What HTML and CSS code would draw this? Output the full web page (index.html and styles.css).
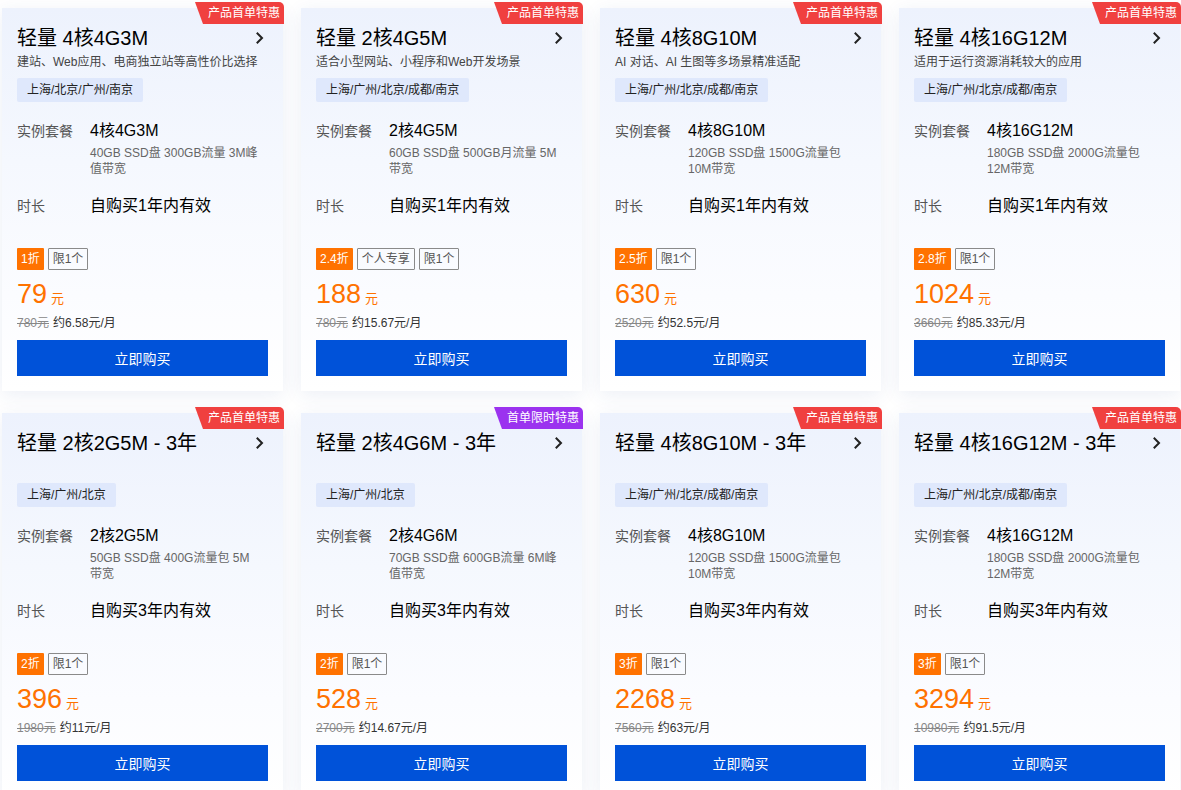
FILE: index.html
```html
<!DOCTYPE html>
<html lang="zh-CN">
<head>
<meta charset="utf-8">
<title>轻量应用服务器</title>
<link rel="stylesheet" href="styles.css">
</head>
<body>
<div class="grid">

  <div class="card">
    <span class="badge red">产品首单特惠</span>
    <div class="head"><span class="title">轻量 4核4G3M</span><svg class="chev" width="8" height="12" viewBox="0 0 8 12"><polyline points="1.5,1.5 6,6 1.5,10.5" /></svg></div>
    <div class="sub">建站、Web应用、电商独立站等高性价比选择</div>
    <div class="region">上海/北京/广州/南京</div>
    <div class="spec"><span class="lab">实例套餐</span><div class="val"><div class="v">4核4G3M</div><div class="desc">40GB SSD盘 300GB流量 3M峰值带宽</div></div></div>
    <div class="spec dur"><span class="lab">时长</span><div class="val"><div class="v">自购买1年内有效</div></div></div>
    <div class="tags"><span class="disc">1折</span><span class="lim">限1个</span></div>
    <div class="price"><span class="num">79</span><span class="yuan">元</span></div>
    <div class="orig"><s>780元</s><span>约6.58元/月</span></div>
    <button class="buy">立即购买</button>
  </div>

  <div class="card">
    <span class="badge red">产品首单特惠</span>
    <div class="head"><span class="title">轻量 2核4G5M</span><svg class="chev" width="8" height="12" viewBox="0 0 8 12"><polyline points="1.5,1.5 6,6 1.5,10.5" /></svg></div>
    <div class="sub">适合小型网站、小程序和Web开发场景</div>
    <div class="region">上海/广州/北京/成都/南京</div>
    <div class="spec"><span class="lab">实例套餐</span><div class="val"><div class="v">2核4G5M</div><div class="desc">60GB SSD盘 500GB月流量 5M带宽</div></div></div>
    <div class="spec dur"><span class="lab">时长</span><div class="val"><div class="v">自购买1年内有效</div></div></div>
    <div class="tags"><span class="disc">2.4折</span><span class="lim">个人专享</span><span class="lim">限1个</span></div>
    <div class="price"><span class="num">188</span><span class="yuan">元</span></div>
    <div class="orig"><s>780元</s><span>约15.67元/月</span></div>
    <button class="buy">立即购买</button>
  </div>

  <div class="card">
    <span class="badge red">产品首单特惠</span>
    <div class="head"><span class="title">轻量 4核8G10M</span><svg class="chev" width="8" height="12" viewBox="0 0 8 12"><polyline points="1.5,1.5 6,6 1.5,10.5" /></svg></div>
    <div class="sub">AI 对话、AI 生图等多场景精准适配</div>
    <div class="region">上海/广州/北京/成都/南京</div>
    <div class="spec"><span class="lab">实例套餐</span><div class="val"><div class="v">4核8G10M</div><div class="desc">120GB SSD盘 1500G流量包 10M带宽</div></div></div>
    <div class="spec dur"><span class="lab">时长</span><div class="val"><div class="v">自购买1年内有效</div></div></div>
    <div class="tags"><span class="disc">2.5折</span><span class="lim">限1个</span></div>
    <div class="price"><span class="num">630</span><span class="yuan">元</span></div>
    <div class="orig"><s>2520元</s><span>约52.5元/月</span></div>
    <button class="buy">立即购买</button>
  </div>

  <div class="card">
    <span class="badge red">产品首单特惠</span>
    <div class="head"><span class="title">轻量 4核16G12M</span><svg class="chev" width="8" height="12" viewBox="0 0 8 12"><polyline points="1.5,1.5 6,6 1.5,10.5" /></svg></div>
    <div class="sub">适用于运行资源消耗较大的应用</div>
    <div class="region">上海/广州/北京/成都/南京</div>
    <div class="spec"><span class="lab">实例套餐</span><div class="val"><div class="v">4核16G12M</div><div class="desc">180GB SSD盘 2000G流量包 12M带宽</div></div></div>
    <div class="spec dur"><span class="lab">时长</span><div class="val"><div class="v">自购买1年内有效</div></div></div>
    <div class="tags"><span class="disc">2.8折</span><span class="lim">限1个</span></div>
    <div class="price"><span class="num">1024</span><span class="yuan">元</span></div>
    <div class="orig"><s>3660元</s><span>约85.33元/月</span></div>
    <button class="buy">立即购买</button>
  </div>

  <div class="card">
    <span class="badge red">产品首单特惠</span>
    <div class="head"><span class="title">轻量 2核2G5M - 3年</span><svg class="chev" width="8" height="12" viewBox="0 0 8 12"><polyline points="1.5,1.5 6,6 1.5,10.5" /></svg></div>
    <div class="sub"></div>
    <div class="region">上海/广州/北京</div>
    <div class="spec"><span class="lab">实例套餐</span><div class="val"><div class="v">2核2G5M</div><div class="desc">50GB SSD盘 400G流量包 5M带宽</div></div></div>
    <div class="spec dur"><span class="lab">时长</span><div class="val"><div class="v">自购买3年内有效</div></div></div>
    <div class="tags"><span class="disc">2折</span><span class="lim">限1个</span></div>
    <div class="price"><span class="num">396</span><span class="yuan">元</span></div>
    <div class="orig"><s>1980元</s><span>约11元/月</span></div>
    <button class="buy">立即购买</button>
  </div>

  <div class="card">
    <span class="badge purple">首单限时特惠</span>
    <div class="head"><span class="title">轻量 2核4G6M - 3年</span><svg class="chev" width="8" height="12" viewBox="0 0 8 12"><polyline points="1.5,1.5 6,6 1.5,10.5" /></svg></div>
    <div class="sub"></div>
    <div class="region">上海/广州/北京</div>
    <div class="spec"><span class="lab">实例套餐</span><div class="val"><div class="v">2核4G6M</div><div class="desc">70GB SSD盘 600GB流量 6M峰值带宽</div></div></div>
    <div class="spec dur"><span class="lab">时长</span><div class="val"><div class="v">自购买3年内有效</div></div></div>
    <div class="tags"><span class="disc">2折</span><span class="lim">限1个</span></div>
    <div class="price"><span class="num">528</span><span class="yuan">元</span></div>
    <div class="orig"><s>2700元</s><span>约14.67元/月</span></div>
    <button class="buy">立即购买</button>
  </div>

  <div class="card">
    <span class="badge red">产品首单特惠</span>
    <div class="head"><span class="title">轻量 4核8G10M - 3年</span><svg class="chev" width="8" height="12" viewBox="0 0 8 12"><polyline points="1.5,1.5 6,6 1.5,10.5" /></svg></div>
    <div class="sub"></div>
    <div class="region">上海/广州/北京/成都/南京</div>
    <div class="spec"><span class="lab">实例套餐</span><div class="val"><div class="v">4核8G10M</div><div class="desc">120GB SSD盘 1500G流量包 10M带宽</div></div></div>
    <div class="spec dur"><span class="lab">时长</span><div class="val"><div class="v">自购买3年内有效</div></div></div>
    <div class="tags"><span class="disc">3折</span><span class="lim">限1个</span></div>
    <div class="price"><span class="num">2268</span><span class="yuan">元</span></div>
    <div class="orig"><s>7560元</s><span>约63元/月</span></div>
    <button class="buy">立即购买</button>
  </div>

  <div class="card">
    <span class="badge red">产品首单特惠</span>
    <div class="head"><span class="title">轻量 4核16G12M - 3年</span><svg class="chev" width="8" height="12" viewBox="0 0 8 12"><polyline points="1.5,1.5 6,6 1.5,10.5" /></svg></div>
    <div class="sub"></div>
    <div class="region">上海/广州/北京/成都/南京</div>
    <div class="spec"><span class="lab">实例套餐</span><div class="val"><div class="v">4核16G12M</div><div class="desc">180GB SSD盘 2000G流量包 12M带宽</div></div></div>
    <div class="spec dur"><span class="lab">时长</span><div class="val"><div class="v">自购买3年内有效</div></div></div>
    <div class="tags"><span class="disc">3折</span><span class="lim">限1个</span></div>
    <div class="price"><span class="num">3294</span><span class="yuan">元</span></div>
    <div class="orig"><s>10980元</s><span>约91.5元/月</span></div>
    <button class="buy">立即购买</button>
  </div>

</div>
</body>
</html>
```
FILE: styles.css
```css
* { box-sizing: border-box; }
html, body {
  margin: 0;
  padding: 0;
  background: #fff;
  font-family: "Liberation Sans", "Noto Sans CJK SC", Arial, sans-serif;
  color: #000;
}
.grid {
  display: grid;
  grid-template-columns: repeat(4, 281px);
  column-gap: 18px;
  row-gap: 22px;
  padding: 8px 0 0 2px;
}
.card {
  position: relative;
  height: 383px;
  padding: 16px 15px 15px;
  background: linear-gradient(180deg, #edf2fd 0%, #f5f8fe 40%, #fbfcff 75%, #fff 100%);
  box-shadow: 0 4px 18px rgba(40, 80, 160, 0.09);
  display: flex;
  flex-direction: column;
}
.badge {
  position: absolute;
  top: -6px;
  right: -1px;
  height: 22px;
  line-height: 22px;
  padding: 0 4px 0 13px;
  font-size: 12px;
  color: #fff;
  border-radius: 0 5px 0 3px;
  clip-path: polygon(0 0, 100% 0, 100% 100%, 8px 100%);
}
.badge.red { background: #f0403f; }
.badge.purple { background: #9b32ef; }
.head {
  display: flex;
  align-items: center;
  justify-content: space-between;
  height: 28px;
}
.title {
  font-size: 20px;
  line-height: 28px;
  color: #000;
}
.chev {
  margin-right: 4px;
  fill: none;
  stroke: #222;
  stroke-width: 2;
  stroke-linecap: square;
}
.sub {
  font-size: 12px;
  line-height: 20px;
  min-height: 20px;
  color: #444;
}
.region {
  align-self: flex-start;
  margin-top: 6px;
  height: 24px;
  line-height: 24px;
  padding: 0 10px;
  background: #dfe8fc;
  border-radius: 2px;
  font-size: 12px;
  color: #222;
}
.spec {
  display: flex;
  margin-top: 17px;
}
.lab {
  width: 73px;
  flex: none;
  font-size: 14px;
  line-height: 24px;
  color: #555;
}
.v {
  font-size: 16px;
  line-height: 24px;
  color: #000;
}
.desc {
  width: 170px;
  margin-top: 2px;
  font-size: 12px;
  line-height: 16px;
  color: #666;
}
.tags {
  display: flex;
  gap: 4px;
  margin-top: 30px;
}
.disc {
  height: 22px;
  line-height: 22px;
  padding: 0 4px;
  background: #ff7200;
  color: #fff;
  font-size: 12px;
  border-radius: 1px;
}
.lim {
  height: 22px;
  line-height: 20px;
  padding: 0 4px;
  border: 1px solid #8a8a8a;
  color: #555;
  font-size: 12px;
  border-radius: 1px;
}
.price {
  margin-top: 8px;
  height: 32px;
  line-height: 32px;
  color: #ff7200;
}
.num {
  font-size: 27px;
}
.yuan {
  font-size: 13px;
  margin-left: 4px;
}
.orig {
  margin-top: 4px;
  font-size: 12px;
  line-height: 18px;
  color: #333;
}
.orig s {
  color: #888;
  margin-right: 4px;
}
.buy {
  margin-top: 8px;
  height: 36px;
  width: 100%;
  border: 0;
  border-radius: 0;
  background: #0052d9;
  color: #fff;
  font-family: inherit;
  font-size: 14px;
  cursor: pointer;
}
```
